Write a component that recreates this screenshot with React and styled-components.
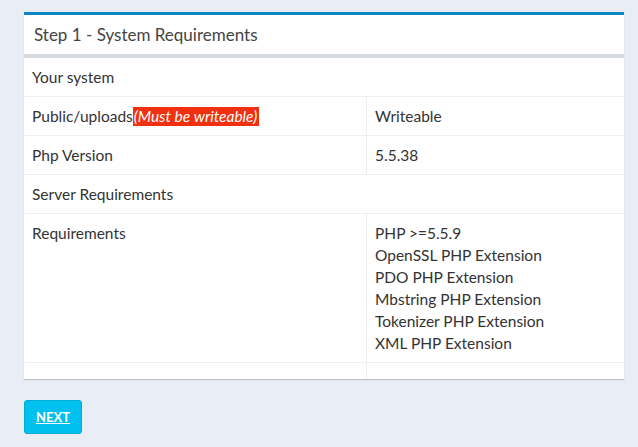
import React from 'react';
import styled, { createGlobalStyle } from 'styled-components';

const GlobalStyle = createGlobalStyle`
  html, body {
    margin: 0;
    padding: 0;
    background: #e9edf5;
  }
  body {
    font-family: Lato, "Open Sans", sans-serif;
    color: #333;
  }
`;

const Page = styled.div`
  padding: 12px 14px 0 24px;
  width: 600px;
`;

const Box = styled.div`
  background: #fff;
  border-top: 3px solid #0b87c3;
  box-shadow: 0 1px 1px rgba(0, 0, 0, 0.18);
`;

const BoxHeader = styled.div`
  padding: 0 10px;
  height: 39px;
  display: flex;
  align-items: center;
  border-bottom: 4px solid #d6dae1;
`;

const Title = styled.h3`
  margin: 0;
  font-size: 17px;
  font-weight: 400;
  color: #444;
`;

const Table = styled.div`
  display: grid;
  grid-template-columns: 342px 1fr;
`;

const Cell = styled.div`
  padding: 8px;
  font-size: 15.5px;
  line-height: 22px;
  color: #333;
  border-top: ${({ first }) => (first ? 'none' : '1px solid #f0f0f0')};
  border-left: ${({ right }) => (right ? '1px solid #f0f0f0' : 'none')};
  grid-column: ${({ span }) => (span ? '1 / -1' : 'auto')};
`;

const Warn = styled.span`
  display: inline-block;
  background: #f0300f;
  color: #fff;
  font-style: italic;
  line-height: 19px;
  padding: 0 2px 0 1px;
`;

const Lines = styled.div`
  display: flex;
  flex-direction: column;
`;

const Empty = styled(Cell)`
  height: 16px;
  box-sizing: border-box;
`;

const NextButton = styled.button`
  margin-top: 21px;
  width: 58px;
  height: 34px;
  background: #00c0ef;
  border: 1px solid #00acd6;
  border-radius: 3px;
  color: #fff;
  font-family: Lato, "Open Sans", sans-serif;
  font-weight: 700;
  font-size: 13px;
  text-decoration: underline;
  padding: 0;
  cursor: pointer;
`;

const requirements = [
  'PHP >=5.5.9',
  'OpenSSL PHP Extension',
  'PDO PHP Extension',
  'Mbstring PHP Extension',
  'Tokenizer PHP Extension',
  'XML PHP Extension',
];

export default function App() {
  return (
    <>
      <GlobalStyle />
      <Page>
        <Box>
          <BoxHeader>
            <Title>Step 1 - System Requirements</Title>
          </BoxHeader>
          <Table>
            <Cell first span>Your system</Cell>
            <Cell>
              Public/uploads<Warn>(Must be writeable)</Warn>
            </Cell>
            <Cell right>Writeable</Cell>
            <Cell>Php Version</Cell>
            <Cell right>5.5.38</Cell>
            <Cell span>Server Requirements</Cell>
            <Cell>Requirements</Cell>
            <Cell right>
              <Lines>
                {requirements.map((r) => (
                  <span key={r}>{r}</span>
                ))}
              </Lines>
            </Cell>
            <Empty />
            <Empty right />
          </Table>
        </Box>
        <NextButton>NEXT</NextButton>
      </Page>
    </>
  );
}
